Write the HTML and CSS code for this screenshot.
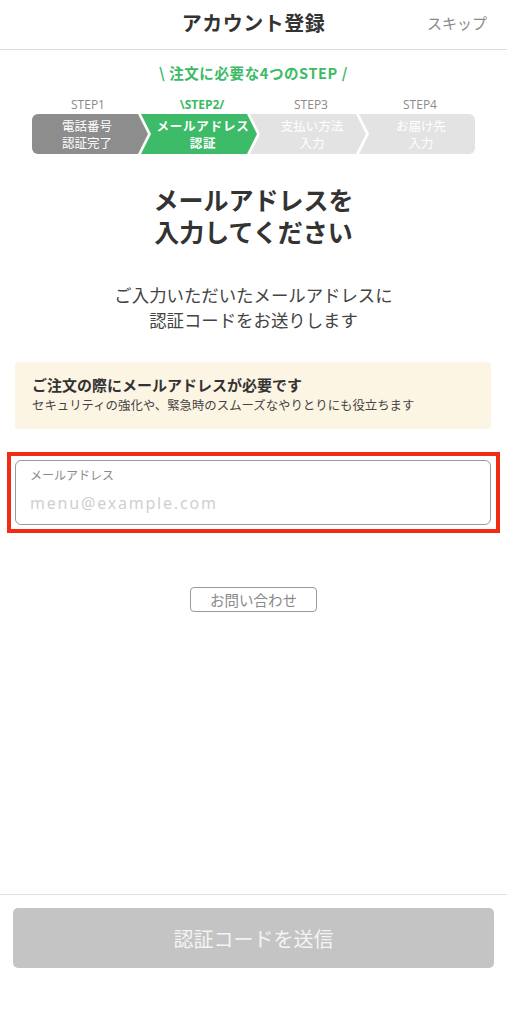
FILE: index.html
```html
<!DOCTYPE html>
<html lang="ja">
<head>
<meta charset="utf-8">
<title>アカウント登録</title>
<link rel="stylesheet" href="styles.css">
</head>
<body>
<div class="page">
  <header class="header">
    <span class="header-side"></span>
    <h1 class="header-title">アカウント登録</h1>
    <a class="header-skip">スキップ</a>
  </header>
  <main class="main">
    <p class="steps-title">\ 注文に必要な4つのSTEP /</p>
    <div class="steps">
      <div class="step step-first">
        <span class="step-label">STEP1</span>
        <div class="seg seg-done">電話番号<br>認証完了</div>
      </div>
      <div class="step">
        <span class="step-label step-label-current">\STEP2/</span>
        <div class="seg seg-current">メールアドレス<br>認証</div>
      </div>
      <div class="step">
        <span class="step-label">STEP3</span>
        <div class="seg seg-todo">支払い方法<br>入力</div>
      </div>
      <div class="step step-last">
        <span class="step-label">STEP4</span>
        <div class="seg seg-todo">お届け先<br>入力</div>
      </div>
    </div>
    <h2 class="heading"><span class="heading-line">メールアドレスを</span><span class="heading-line">入力してください</span></h2>
    <p class="lead">ご入力いただいたメールアドレスに<br>認証コードをお送りします</p>
    <div class="notice">
      <p class="notice-title">ご注文の際にメールアドレスが必要です</p>
      <p class="notice-text">セキュリティの強化や、緊急時のスムーズなやりとりにも役立ちます</p>
    </div>
    <div class="highlight">
      <label class="field">
        <span class="field-label">メールアドレス</span>
        <input class="field-input" type="email" placeholder="menu@example.com">
      </label>
    </div>
    <div class="inquiry-wrap">
      <button class="inquiry">お問い合わせ</button>
    </div>
  </main>
  <footer class="footer">
    <button class="submit" disabled>認証コードを送信</button>
  </footer>
</div>
</body>
</html>
```
FILE: styles.css
```css
* { box-sizing: border-box; }
html, body { margin: 0; padding: 0; }
body {
  font-family: "Noto Sans CJK JP", "Noto Sans", sans-serif;
  color: #333;
  background: #fff;
}
p, h1, h2 { margin: 0; }
.page {
  min-height: 100vh;
  display: flex;
  flex-direction: column;
}
.header {
  height: 50px;
  border-bottom: 1px solid #dcdcdc;
  display: grid;
  grid-template-columns: 1fr auto 1fr;
  align-items: center;
  padding: 0 20px 4px;
}
.header-title {
  font-size: 20px;
  font-weight: 700;
  color: #333;
  letter-spacing: 0.5px;
}
.header-skip {
  justify-self: end;
  font-size: 15px;
  color: #8a8a8a;
}
.main {
  flex: 1;
  display: flex;
  flex-direction: column;
}
.steps-title {
  margin-top: 13px;
  text-align: center;
  font-size: 14.5px;
  line-height: 20px;
  font-weight: 700;
  letter-spacing: 0.6px;
  color: #3cba66;
}
.steps {
  margin: 14px 32px 0;
  display: flex;
}
.step {
  flex: 1;
  display: flex;
  flex-direction: column;
  align-items: stretch;
  margin-left: -7px;
}
.step-first { margin-left: 0; }
.step-label {
  text-align: center;
  font-family: "Open Sans", "Noto Sans", sans-serif;
  font-size: 12px;
  line-height: 16px;
  color: #8a8a8a;
  margin-bottom: 1px;
  padding-left: 6px;
}
.step-first .step-label { padding-left: 0; padding-right: 4px; }
.step-label-current {
  color: #3cba66;
  font-weight: 700;
}
.seg {
  height: 40px;
  display: flex;
  align-items: center;
  justify-content: center;
  text-align: center;
  color: #fff;
  font-size: 12.5px;
  line-height: 17px;
  padding-left: 8px;
  clip-path: polygon(0 0, calc(100% - 10px) 0, 100% 50%, calc(100% - 10px) 100%, 0 100%, 10px 50%);
}
.step-first .seg {
  padding-left: 0;
  padding-right: 6px;
  border-radius: 6px 0 0 6px;
  clip-path: polygon(0 0, calc(100% - 10px) 0, 100% 50%, calc(100% - 10px) 100%, 0 100%);
}
.step-last .seg {
  border-radius: 0 6px 6px 0;
  clip-path: polygon(0 0, 100% 0, 100% 100%, 0 100%, 10px 50%);
}
.seg-done { background: #8d8d8d; }
.seg-current { background: #3dbb68; font-weight: 700; letter-spacing: 0.8px; }
.seg-todo { background: #e3e3e3; }
.heading {
  margin-top: 29px;
  display: flex;
  flex-direction: column;
  align-items: center;
  font-size: 25px;
  font-weight: 700;
  color: #333;
}
.heading-line {
  display: block;
  height: 32px;
  line-height: 32px;
}
.lead {
  margin-top: 35px;
  text-align: center;
  font-size: 17.4px;
  line-height: 25px;
  color: #444;
}
.notice {
  margin: 30px 16px 0 15px;
  background: #fdf5e3;
  border-radius: 3px;
  padding: 12px 16px 14px 17px;
}
.notice-title {
  font-size: 15px;
  line-height: 22px;
  font-weight: 700;
  color: #333;
}
.notice-text {
  font-size: 12.4px;
  line-height: 19px;
  color: #444;
}
.highlight {
  margin: 23px 7px 0;
  border: 4px solid #f12b14;
  padding: 4px 5px 4px 4px;
}
.field {
  display: flex;
  flex-direction: column;
  height: 65px;
  border: 1.5px solid #9a9a9a;
  border-radius: 6px;
  padding: 5px 14px 0;
}
.field-label {
  font-size: 12px;
  line-height: 18px;
  color: #8a8a8a;
}
.field-input {
  margin-top: 8px;
  border: 0;
  outline: 0;
  padding: 0;
  font-family: "Noto Sans", sans-serif;
  font-size: 16px;
  line-height: 22px;
  letter-spacing: 1.8px;
  color: #333;
  background: transparent;
}
.field-input::placeholder { color: #cfcfcf; }
.inquiry-wrap {
  margin-top: 54px;
  display: flex;
  justify-content: center;
}
.inquiry {
  width: 127px;
  height: 25px;
  padding: 0;
  border: 1.2px solid #9a9a9a;
  border-radius: 4px;
  background: #fff;
  font-family: inherit;
  font-size: 14.5px;
  line-height: 20px;
  color: #8a8a8a;
}
.footer {
  height: 130px;
  border-top: 1px solid #e0e0e0;
  padding: 13px 13px 0;
}
.submit {
  width: 100%;
  height: 60px;
  border: 0;
  border-radius: 5px;
  background: #c4c4c4;
  color: #f4f4f4;
  font-family: inherit;
  font-size: 20px;
}
```
